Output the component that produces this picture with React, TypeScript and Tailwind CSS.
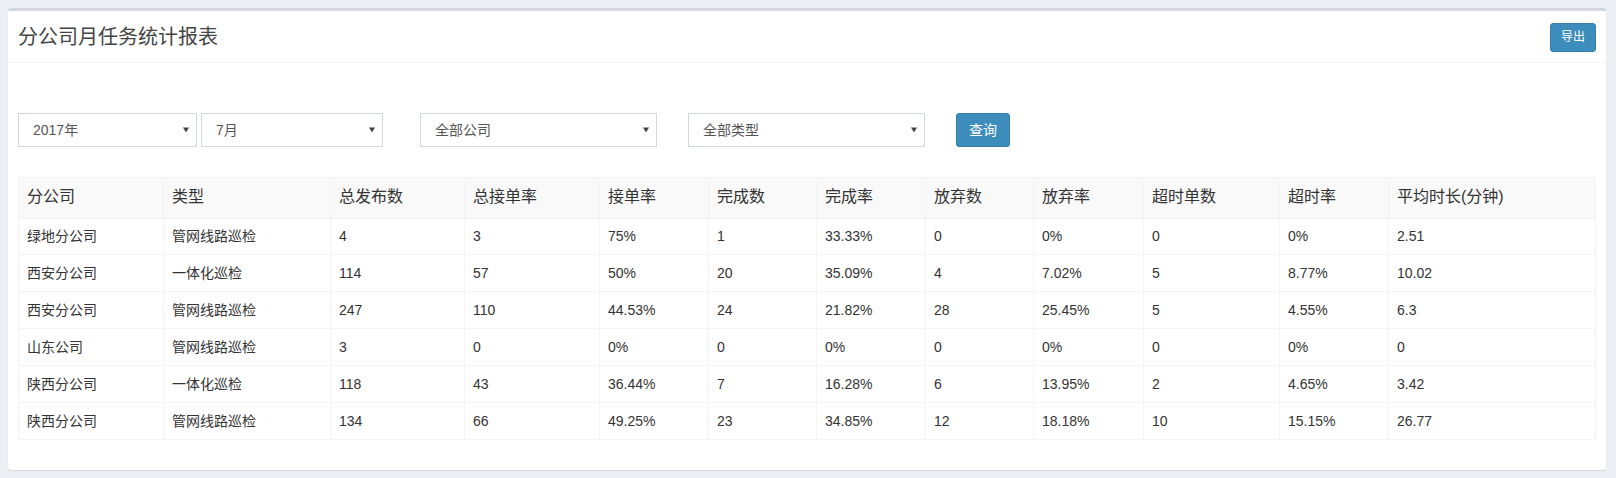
import React from 'react';

const columns = ['分公司', '类型', '总发布数', '总接单率', '接单率', '完成数', '完成率', '放弃数', '放弃率', '超时单数', '超时率', '平均时长(分钟)'];
const colWidths = [145, 167, 134, 135, 109, 108, 109, 108, 110, 136, 109];

const rows = [
  ['绿地分公司', '管网线路巡检', '4', '3', '75%', '1', '33.33%', '0', '0%', '0', '0%', '2.51'],
  ['西安分公司', '一体化巡检', '114', '57', '50%', '20', '35.09%', '4', '7.02%', '5', '8.77%', '10.02'],
  ['西安分公司', '管网线路巡检', '247', '110', '44.53%', '24', '21.82%', '28', '25.45%', '5', '4.55%', '6.3'],
  ['山东公司', '管网线路巡检', '3', '0', '0%', '0', '0%', '0', '0%', '0', '0%', '0'],
  ['陕西分公司', '一体化巡检', '118', '43', '36.44%', '7', '16.28%', '6', '13.95%', '2', '4.65%', '3.42'],
  ['陕西分公司', '管网线路巡检', '134', '66', '49.25%', '23', '34.85%', '12', '18.18%', '10', '15.15%', '26.77'],
];

const Select = ({ label, width }: { label: string; width: string }) => (
  <div className={`${width} h-[34px] border border-[#d2d6de] bg-white flex items-center justify-between pl-[14px] pr-[7px] text-[14px] text-[#555]`}>
    <span>{label}</span>
    <svg width="6" height="6" viewBox="0 0 6 6">
      <path d="M0 0.5 L6 0.5 L3 5.5 Z" fill="#444" />
    </svg>
  </div>
);

export default function App() {
  return (
    <div
      className="min-h-[478px] bg-[#ecf0f5] pt-[8px] pl-[8px] pr-[10px] pb-[8px]"
      style={{ fontFamily: '"Liberation Sans", "Noto Sans CJK SC", sans-serif' }}
    >
      <div className="bg-white border-t-[3px] border-[#d2d6de] rounded-[3px] shadow-[0_1px_1px_rgba(0,0,0,0.1)]">
        <div className="flex items-center justify-between h-[52px] pl-[10px] pr-[10px] border-b border-[#f4f4f4]">
          <h1 className="text-[20px] text-[#444] leading-none">分公司月任务统计报表</h1>
          <button className="h-[29px] w-[46px] mt-[1px] bg-[#3c8dbc] border border-[#367fa9] rounded-[3px] text-white text-[12px]">导出</button>
        </div>
        <div className="px-[10px] pt-[50px] pb-[30px]">
          <div className="flex items-center">
            <Select label="2017年" width="w-[179px]" />
            <div className="w-[4px]" />
            <Select label="7月" width="w-[182px]" />
            <div className="w-[37px]" />
            <Select label="全部公司" width="w-[237px]" />
            <div className="w-[31px]" />
            <Select label="全部类型" width="w-[237px]" />
            <div className="w-[31px]" />
            <button className="h-[34px] w-[54px] bg-[#3c8dbc] border border-[#367fa9] rounded-[3px] text-white text-[14px]">查询</button>
          </div>
          <table className="mt-[30px] w-full table-fixed border-collapse border border-[#f4f4f4] text-[14px] text-[#333]">
            <colgroup>
              {colWidths.map((w, i) => (
                <col key={i} style={{ width: w }} />
              ))}
              <col />
            </colgroup>
            <thead>
              <tr className="bg-[#f9f9f9]">
                {columns.map((c) => (
                  <th key={c} className="text-left font-normal text-[16px] text-[#333] h-[40px] px-[8px] border border-[#f4f4f4] border-b-2">
                    {c}
                  </th>
                ))}
              </tr>
            </thead>
            <tbody>
              {rows.map((r, i) => (
                <tr key={i}>
                  {r.map((cell, j) => (
                    <td key={j} className="h-[37px] px-[8px] border border-[#f4f4f4]">
                      {cell}
                    </td>
                  ))}
                </tr>
              ))}
            </tbody>
          </table>
        </div>
      </div>
    </div>
  );
}
